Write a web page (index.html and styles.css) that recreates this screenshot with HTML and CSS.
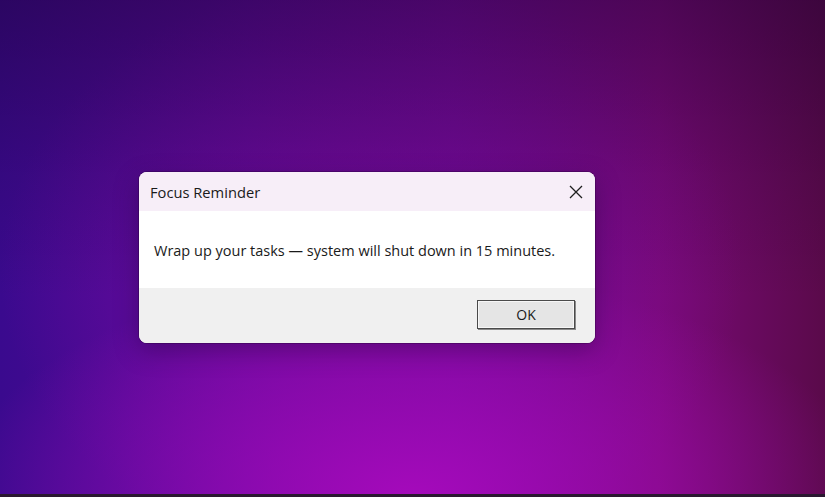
FILE: index.html
```html
<!DOCTYPE html>
<html lang="en">
<head>
    <meta charset="UTF-8">
    <meta name="viewport" content="width=device-width, initial-scale=1.0">
    <title>Focus Reminder</title>
    <link rel="stylesheet" href="styles.css">
</head>
<body>
    <div class="desktop">
        <div class="dialog">
            <div class="titlebar">
                <span class="title">Focus Reminder</span>
                <button type="button" class="close" aria-label="Close">
                    <svg width="14" height="14" viewBox="0 0 14 14">
                        <path d="M1 1 L13 13 M13 1 L1 13" stroke="#1f1f1f" stroke-width="1.3" fill="none"/>
                    </svg>
                </button>
            </div>
            <div class="message">Wrap up your tasks — system will shut down in 15 minutes.</div>
            <div class="footer">
                <button type="button" class="ok">OK</button>
            </div>
        </div>
    </div>
    <div class="taskbar-edge"></div>
</body>
</html>
```

FILE: styles.css
```css
html, body {
    margin: 0;
    height: 100%;
}

body {
    font-family: "Open Sans", "Noto Sans", sans-serif;
    display: flex;
    flex-direction: column;
    overflow: hidden;
}

.desktop {
    flex: 1;
    padding: 172px 0 0 139px;
    background:
        linear-gradient(180deg, rgba(25, 0, 45, 0.45) 0%, rgba(25, 0, 45, 0.15) 35%, rgba(25, 0, 45, 0) 60%),
        radial-gradient(ellipse 55% 45% at 50% 100%, rgba(170, 10, 190, 0.9), rgba(170, 10, 190, 0) 100%),
        radial-gradient(ellipse 45% 60% at 45% 55%, rgba(125, 10, 160, 0.8), rgba(125, 10, 160, 0) 100%),
        linear-gradient(90deg, #3a0a8e 0%, #5a0a9a 30%, #720a98 55%, #7a0a78 80%, #5a0a4a 100%);
    background-color: #5a0a90;
}

.dialog {
    width: 456px;
    border-radius: 8px;
    overflow: hidden;
    background: #fff;
    box-shadow: 0 0 0 1px rgba(40, 0, 60, 0.35), 0 8px 24px rgba(30, 0, 50, 0.35);
}

.titlebar {
    height: 39px;
    display: flex;
    align-items: center;
    justify-content: space-between;
    background: #f7eef8;
    padding-left: 11px;
}

.title {
    font-size: 14.7px;
    color: #1a1a1a;
}

.close {
    width: 38px;
    height: 39px;
    border: none;
    background: transparent;
    display: flex;
    align-items: center;
    justify-content: center;
    padding: 0;
}

.message {
    height: 77px;
    display: flex;
    align-items: center;
    padding-left: 15px;
    padding-top: 2px;
    box-sizing: border-box;
    font-size: 14.5px;
    color: #1a1a1a;
}

.footer {
    height: 55px;
    background: #f0f0f0;
    display: flex;
    justify-content: flex-end;
    align-items: flex-start;
    padding: 12px 20px 0 0;
    box-sizing: border-box;
}

.ok {
    width: 98px;
    height: 29px;
    font-family: inherit;
    font-size: 14px;
    color: #1a1a1a;
    background: #e5e5e5;
    border: 1px solid #4a4a4a;
    box-shadow: inset 0 0 0 1px #f6f6f6, 1px 1px 0 #8a8a8a;
    padding: 0;
}

.taskbar-edge {
    height: 3px;
    background: #2a1830;
}
```
